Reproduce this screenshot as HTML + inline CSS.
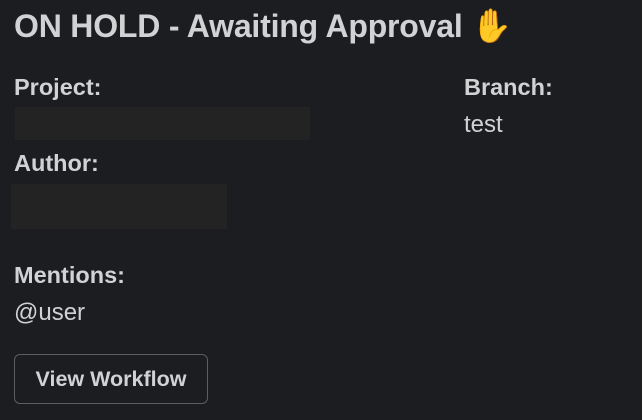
<!DOCTYPE html>
<html><head><meta charset="utf-8"><style>
html,body{margin:0;padding:0;background:#1b1d21;width:642px;height:420px;overflow:hidden;}
body{font-family:"Liberation Sans",sans-serif;color:#d1d2d3;position:relative;}
.a{position:absolute;white-space:nowrap;}
.t{font-weight:bold;font-size:32px;left:14px;top:7px;letter-spacing:-0.2px;}
.l{font-weight:bold;font-size:23.5px;}
.v{font-size:24px;}
.r{position:absolute;background:#232323;}
.btn{position:absolute;left:14px;top:354px;width:194px;height:50px;border:1px solid #5c5d60;border-radius:6px;box-sizing:border-box;font-weight:bold;font-size:21.5px;line-height:48px;text-align:center;}
</style></head><body>
<div class="a t">ON HOLD - Awaiting Approval <span style="font-size:33px">✋</span></div>
<div class="a l" style="left:14px;top:74px">Project:</div>
<div class="a v" style="left:13px;top:111px;color:#aaa">:</div>
<div class="r" style="left:15px;top:107px;width:295px;height:33px"></div>
<div class="a l" style="left:464px;top:74px">Branch:</div>
<div class="a v" style="left:464px;top:111px">test</div>
<div class="a l" style="left:14px;top:150px">Author:</div>
<div class="r" style="left:11px;top:184px;width:216px;height:45px"></div>
<div class="a l" style="left:14px;top:262px">Mentions:</div>
<div class="a v" style="left:14px;top:299px">@user</div>
<div class="btn">View Workflow</div>
</body></html>
